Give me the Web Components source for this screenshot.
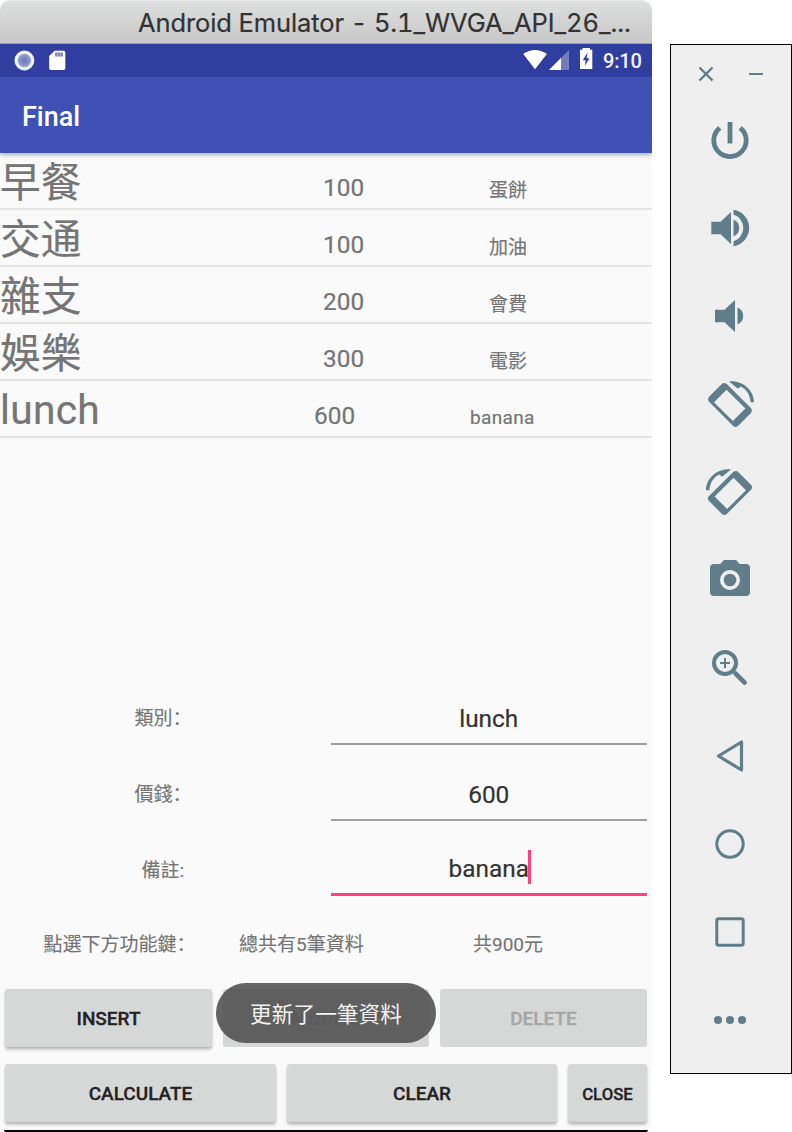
<!DOCTYPE html>
<html lang="zh-Hans">
<head>
<meta charset="utf-8">
<title>Android Emulator</title>
<style>
html,body{margin:0;padding:0;background:#fff;overflow:hidden}
body{width:792px;height:1132px;font-family:Roboto,"Noto Sans CJK SC",sans-serif}
</style>
</head>
<body>
<emulator-desktop></emulator-desktop>
<script>
const define=(name,html)=>customElements.define(name,class extends HTMLElement{
  constructor(){super();const t=document.createElement('template');t.innerHTML=html;
    this.attachShadow({mode:'open'}).append(t.content.cloneNode(true));}
});

define('title-bar',`<style>
:host{display:block;box-sizing:border-box;height:44px;border-radius:10px 10px 0 0;border-top:1px solid #e9e9e9;border-bottom:1px solid #9c9ea6;
background:linear-gradient(#dedfdf,#c6c7c6);padding-left:138px;font:25.5px/44px Inter,sans-serif;font-feature-settings:"tnum";letter-spacing:-.1px;color:#323332;white-space:nowrap;-webkit-text-stroke:.2px}
</style><slot></slot>`);

define('status-bar',`<style>
:host{display:flex;height:32.5px;background:#303f9f;color:#f3f4fa;align-items:center}
svg{display:block;flex:none}
.t{font-size:20px;font-weight:500;line-height:32px;margin-left:8px;padding-top:1px;letter-spacing:-.2px}
.l{width:522px}
</style><svg class="l" width="522" height="32" viewBox="0 0 522 32">
<defs><radialGradient id="g"><stop offset="0" stop-color="#6a75b8"/><stop offset="1" stop-color="#a3abd6"/></radialGradient></defs>
<circle cx="24.4" cy="16.5" r="8.3" fill="url(#g)" stroke="#f1f2fa" stroke-width="3.2"/>
<path d="M54.5 6.7H63.5Q65.3 6.7 65.3 8.5V24.2Q65.3 26 63.5 26H51Q49.2 26 49.2 24.2V12Z" fill="#fff"/>
<path d="M55 8.5H63V12.5H55Z" fill="#8089c2"/><path d="M57.3 8.5v4M60.3 8.5v4" stroke="#a8aed8" stroke-width=".8"/></svg>
<svg width="73" height="32" viewBox="522 0 73 32">
<path d="M523.3 10Q535 2 546.9 10L535 25.3Z" fill="#fff"/>
<path d="M549 26L569 6V26Z" fill="#737dbd"/><path d="M549 26L561 14V26Z" fill="#fff"/>
<path d="M582.5 4H590V5.7H592.3V25H580V5.7H582.5Z" fill="#fff"/><path d="M587.5 8.5L582.8 16.3H585.6L584.8 22L589.5 14.2H586.7Z" fill="#303f9f"/></svg>
<span class="t">9:10</span>`);

define('app-bar',`<style>
:host{display:block;position:relative;height:76px;background:#3f51b5;box-shadow:0 2px 4px rgba(0,0,0,.3);clip-path:inset(0 0 -8px 0);padding-left:22px;
font-size:27px;font-weight:500;line-height:80px;color:#fff}
</style><slot></slot>`);

define('expense-row',`<style>
:host{display:grid;grid-template-columns:var(--a,323px) var(--b,166px) 1fr;align-items:baseline;box-sizing:border-box;height:57px;
border-bottom:2px solid #e4e4e4;padding-top:var(--t,3px);color:#757575;white-space:nowrap;line-height:54px;overflow:hidden;-webkit-text-stroke:.2px}
.n{font-size:40.7px}.p{font-size:24.4px;transform:translateY(var(--up,-1px))}.m{font-size:19px}
</style><span class="n"><slot name="kind"></slot></span><span class="p"><slot name="price"></slot></span><span class="m"><slot name="note"></slot></span>`);

define('form-field',`<style>
:host{display:grid;grid-template-columns:331px 315.5px;align-items:baseline;height:var(--h,76px);color:#757575;font-size:19px}
.l{padding-left:var(--x,134.5px);line-height:30px;margin-top:-1px;transform:translateY(var(--up,-2px));-webkit-text-stroke:.15px}
.e{box-sizing:border-box;height:52px;line-height:var(--lh,51px);text-align:center;font-size:24.4px;color:#333;border-bottom:var(--line,2px solid #a0a0a0);-webkit-text-stroke:.2px}
.c{display:inline-block;width:3px;height:34px;background:#ff4081;vertical-align:-7px;margin-right:-2.5px;margin-left:-.5px}
:host(:not([active])) .c{display:none}
</style><span class="l"><slot name="label"></slot></span><span class="e"><slot></slot><i class="c"></i></span>`);

define('flat-button',`<style>
:host{display:block;border-radius:3px;background:#d6d7d7;height:58px;line-height:60px;text-align:center;font-size:var(--fs,19px);font-weight:500;color:#222;
box-shadow:0 3px 3px rgba(0,0,0,.2),0 1px 2px rgba(0,0,0,.1);-webkit-text-stroke:.3px}
:host([disabled]){box-shadow:none;color:#a5a6a6}
</style><slot></slot>`);

define('toast-message',`<style>
:host{position:absolute;left:216px;top:983px;width:220px;height:60px;border-radius:30px;background:rgba(82,82,82,.9);
color:#f2f2f2;font-size:21.7px;line-height:63px;text-align:center;white-space:nowrap}
</style><slot></slot>`);

define('phone-window',`<style>
:host{display:flex;flex-direction:column;position:relative;width:652px;height:1132px}
.screen{display:flex;flex-direction:column;height:977.5px;background:#fafafa}
.list{height:285px;flex:none}
.form{margin-top:255.5px;height:228px}
.sum{display:grid;grid-template-columns:239px 234px 1fr;color:#757575;font-size:19px;line-height:30px;margin-top:9px;-webkit-text-stroke:.15px}
.sum :first-child{padding-left:43.5px}
.btns{display:grid;column-gap:11px;padding:0 5px}
.one{grid-template-columns:207px 206px 207px}
.stack{display:grid;row-gap:17px;margin-top:28.5px}
.two{grid-template-columns:271px 270px 79px}
.edge{height:2px;background:#000;margin:0 4px;border-radius:0 0 3px 3px}
</style>
<title-bar>Android Emulator - 5.1_WVGA_API_26_...</title-bar>
<status-bar></status-bar>
<app-bar>Final</app-bar>
<div class="screen">
<div class="list">
<expense-row><span slot="kind">早餐</span><span slot="price">100</span><span slot="note">蛋餅</span></expense-row>
<expense-row><span slot="kind">交通</span><span slot="price">100</span><span slot="note">加油</span></expense-row>
<expense-row><span slot="kind">雜支</span><span slot="price">200</span><span slot="note">會費</span></expense-row>
<expense-row><span slot="kind">娛樂</span><span slot="price">300</span><span slot="note">電影</span></expense-row>
<expense-row style="--a:314px;--b:156px;--t:2px;--up:0px"><span slot="kind" style="letter-spacing:.3px">lunch</span><span slot="price">600</span><span slot="note" style="letter-spacing:.35px">banana</span></expense-row>
</div>
<div class="form">
<form-field><span slot="label">類別：</span>lunch</form-field>
<form-field style="--h:75px"><span slot="label">價錢：</span>600</form-field>
<form-field active style="--x:141.5px;--line:3px solid #ff4081;--lh:50px;--up:0px"><span slot="label">備註:</span>banana</form-field>
</div>
<div class="sum"><span>點選下方功能鍵：</span><span>總共有5筆資料</span><span>共900元</span></div>
<div class="stack">
<div class="btns one"><flat-button>INSERT</flat-button><flat-button disabled>MODIFY</flat-button><flat-button disabled>DELETE</flat-button></div>
<div class="btns two"><flat-button>CALCULATE</flat-button><flat-button>CLEAR</flat-button><flat-button style="--fs:16.8px">CLOSE</flat-button></div>
</div>
</div>
<div class="edge"></div>
<toast-message>更新了一筆資料</toast-message>`);

define('tool-icon',`<style>
:host{display:flex;height:88px;align-items:center;justify-content:center}
</style><slot></slot>`);

define('emulator-toolbar',`<style>
:host{display:block;box-sizing:border-box;width:122px;height:1030px;margin-top:44px;border:1px solid #000;background:#efefef;color:#617d8a}
svg{display:block;width:60px;height:60px;fill:currentColor}
.s{fill:none;stroke:currentColor}
.top{width:120px;height:51px}
tool-icon{margin-right:2px}
</style>
<svg class="top s" viewBox="0 0 120 51" stroke-width="2.4" style="fill:none"><path d="M28.5 22.5L41.5 35.5M41.5 22.5L28.5 35.5"/><path d="M78 29H92" stroke-width="2"/></svg>
<tool-icon><svg viewBox="-30 -30 60 60"><g class="s" stroke-width="4.8"><path d="M0 -18V3.5"/><path d="M-10.2 -12.2A16.2 16.2 0 1 0 10.2 -12.2"/></g></svg></tool-icon>
<tool-icon><svg viewBox="-30 -30 60 60"><path d="M-18.7 -6.3H-9.5L1 -16V16L-9.5 6.3H-18.7ZM3.5 -8.5A9.2 9.2 0 0 1 3.5 8.5ZM3.5 -18.2A18.4 18.4 0 0 1 3.5 18.2V13.5A14.2 14.2 0 0 0 3.5 -13.5Z"/></svg></tool-icon>
<tool-icon><svg viewBox="-30 -30 60 60"><path d="M-15 -6.3H-5.5L5 -16V16L-5.5 6.3H-15ZM7.5 -8.5A9.2 9.2 0 0 1 7.5 8.5Z"/></svg></tool-icon>
<tool-icon><svg viewBox="-30 -30 60 60"><path fill-rule="evenodd" d="M-8 -20.2Q-5.7 -22 -3.5 -20.2L21.2 4.3Q23 6.5 21.2 8.7L8 22Q5.5 24 3.2 22L-21.2 -2.6Q-23 -4.8 -21.2 -7ZM-3.5 -14.2L-16 -1.7L2.9 17L15.4 4.5ZM-1 -22.5C12 -24 24 -14 24 -1.7H20.6C20 -10 16 -15 10.5 -17.5L8.5 -15.5L7 -16Z"/></svg></tool-icon>
<tool-icon><svg viewBox="-30 -30 60 60"><g transform="scale(-1 1)"><path fill-rule="evenodd" d="M-8 -20.2Q-5.7 -22 -3.5 -20.2L21.2 4.3Q23 6.5 21.2 8.7L8 22Q5.5 24 3.2 22L-21.2 -2.6Q-23 -4.8 -21.2 -7ZM-3.5 -14.2L-16 -1.7L2.9 17L15.4 4.5ZM-1 -22.5C12 -24 24 -14 24 -1.7H20.6C20 -10 16 -15 10.5 -17.5L8.5 -15.5L7 -16Z"/></g></svg></tool-icon>
<tool-icon><svg viewBox="-30 -30 60 60"><path fill-rule="evenodd" d="M-6 -20H6L9.7 -16H16Q20 -16 20 -12V12Q20 16 16 16H-16Q-20 16 -20 12V-12Q-20 -16 -16 -16H-9.7ZM0 -10A10 10 0 1 0 0 10A10 10 0 1 0 0 -10Z"/><circle r="6.3"/></svg></tool-icon>
<tool-icon><svg viewBox="-30 -30 60 60"><g class="s"><circle cx="-5" cy="-5" r="11" stroke-width="4"/><path d="M-5 -10V0M-10 -5H0" stroke-width="2"/><path d="M5.5 5.5L14.6 14.6" stroke-width="4.6" stroke-linecap="round"/></g></svg></tool-icon>
<tool-icon><svg class="s" style="fill:none" viewBox="-30 -30 60 60"><path d="M11.5 -14V14L-11.5 0Z" stroke-width="3.2" stroke-linejoin="round"/></svg></tool-icon>
<tool-icon><svg class="s" style="fill:none" viewBox="-30 -30 60 60"><circle r="13.2" stroke-width="3"/></svg></tool-icon>
<tool-icon><svg class="s" style="fill:none" viewBox="-30 -30 60 60"><rect x="-13.2" y="-13.2" width="26.4" height="26.4" rx="1.8" stroke-width="3"/></svg></tool-icon>
<tool-icon><svg viewBox="-30 -30 60 60"><circle cx="-12" r="4"/><circle r="4"/><circle cx="12" r="4"/></svg></tool-icon>`);

define('emulator-desktop',`<style>
:host{display:grid;grid-template-columns:652px 122px;column-gap:18px;width:792px;height:1132px;align-items:start}
</style><phone-window></phone-window><emulator-toolbar></emulator-toolbar>`);
</script>
</body>
</html>
